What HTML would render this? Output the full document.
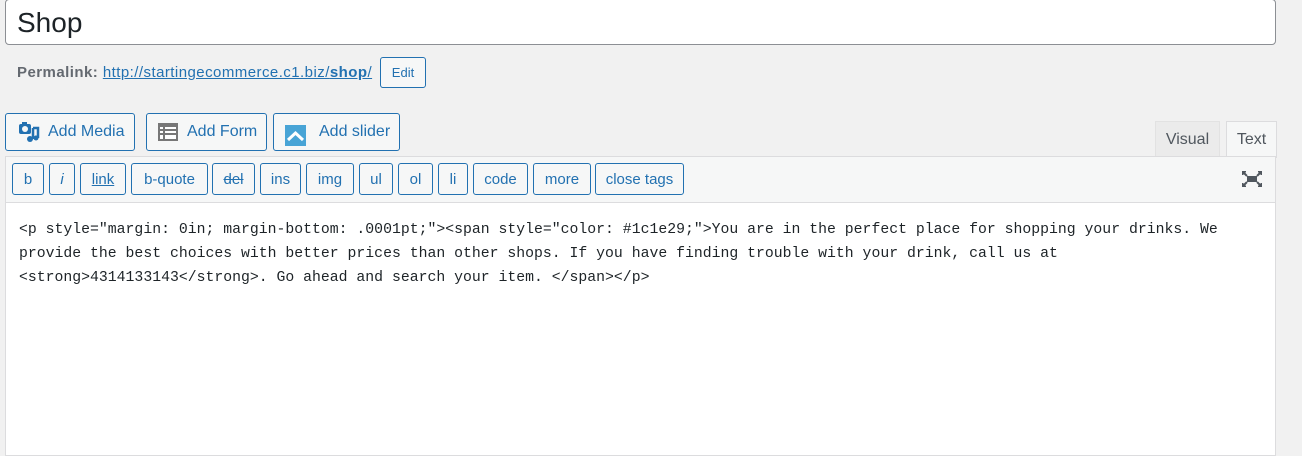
<!DOCTYPE html>
<html><head><style>
body{margin:0;width:1302px;height:455px;background:#f1f1f1;font-family:"Liberation Sans",sans-serif;position:relative;overflow:hidden}
.a{position:absolute;box-sizing:border-box}
.title{left:5px;top:-1px;width:1271px;height:46px;background:#fff;border:1px solid #8c8f94;border-radius:4px;font-size:28px;color:#1d2327;padding:7px 0 0 11px}
.perm{left:17px;top:64px;font-size:15px;color:#646970;letter-spacing:0.45px}
.perm a{color:#2271b1;text-decoration:underline}
.btn{border:1px solid #2271b1;border-radius:3px;background:#f6f7f7;color:#2271b1;font-size:16px;display:flex;align-items:center}
.tb{top:163px;height:32px;border:1px solid #2271b1;border-radius:3px;background:#f6f7f7;color:#2271b1;font-size:15px;display:flex;align-items:center;justify-content:center}
.code{left:19px;top:218px;font-family:"Liberation Mono",monospace;font-size:14.8px;line-height:24px;color:#1d2327;white-space:pre}
</style></head><body>
<div class="a title">Shop</div>
<div class="a perm"><b>Permalink:</b> <a>http://startingecommerce.c1.biz/<b>shop</b>/</a></div>
<div class="a btn" style="left:380px;top:57px;width:46px;height:31px;font-size:13px;justify-content:center">Edit</div>

<div class="a btn" style="left:5px;top:113px;width:130px;height:38px;padding-left:12px">
<svg width="22" height="22" viewBox="0 0 22 22" style="margin-right:8px"><rect x="1" y="3" width="12" height="10" rx="2" fill="#2271b1"/><circle cx="7" cy="8" r="3" fill="#f6f7f7"/><rect x="4" y="1" width="5" height="3" fill="#2271b1"/><path d="M15 7v11M15 7h5v10" stroke="#2271b1" stroke-width="2.5" fill="none"/><circle cx="12" cy="18" r="3" fill="#2271b1"/><circle cx="18" cy="17" r="2.5" fill="#2271b1"/></svg>Add Media</div>
<div class="a btn" style="left:146px;top:113px;width:121px;height:38px;padding-left:11px">
<svg width="20" height="18" viewBox="0 0 20 18" style="margin-right:9px"><rect width="20" height="18" fill="#777"/><rect x="2" y="4" width="16" height="12" fill="#fff"/><rect x="2" y="6" width="16" height="2" fill="#777"/><rect x="2" y="10" width="16" height="2" fill="#777"/><rect x="5" y="4" width="2" height="12" fill="#777"/></svg>Add Form</div>
<div class="a btn" style="left:273px;top:113px;width:127px;height:38px;padding-left:11px">
<svg width="21" height="21" viewBox="0 0 21 21" style="margin-right:13px;margin-top:6px"><rect width="21" height="21" fill="#48a4d6"/><path d="M3 15l7.5-7 7.5 7" stroke="#fff" stroke-width="3" fill="none"/></svg>Add slider</div>

<div class="a" style="left:1155px;top:121px;width:65px;height:36px;background:#ebebeb;border:1px solid #e2e2e2;border-bottom:none;color:#50575e;font-size:16px;text-align:center;line-height:36px">Visual</div>
<div class="a" style="left:1226px;top:121px;width:51px;height:37px;background:#f6f7f7;border:1px solid #dcdcde;border-bottom:none;color:#50575e;font-size:16px;text-align:center;line-height:36px">Text</div>

<div class="a" style="left:5px;top:156px;width:1271px;height:300px;background:#fff;border:1px solid #dcdcde"></div>
<div class="a" style="left:6px;top:157px;width:1269px;height:46px;background:#f6f7f7;border-bottom:1px solid #dcdcde"></div>

<div class="a tb" style="left:12px;width:32px">b</div>
<div class="a tb" style="left:49px;width:26px;font-style:italic">i</div>
<div class="a tb" style="left:80px;width:46px;text-decoration:underline">link</div>
<div class="a tb" style="left:131px;width:77px">b-quote</div>
<div class="a tb" style="left:212px;width:43px;text-decoration:line-through">del</div>
<div class="a tb" style="left:260px;width:41px">ins</div>
<div class="a tb" style="left:306px;width:48px">img</div>
<div class="a tb" style="left:359px;width:34px">ul</div>
<div class="a tb" style="left:398px;width:35px">ol</div>
<div class="a tb" style="left:438px;width:30px">li</div>
<div class="a tb" style="left:473px;width:55px">code</div>
<div class="a tb" style="left:533px;width:58px">more</div>
<div class="a tb" style="left:595px;width:89px">close tags</div>

<svg class="a" style="left:1241px;top:170px" width="22" height="18" viewBox="0 0 22 18"><rect x="6" y="6" width="10" height="6" fill="#50575e"/><path d="M2 2l4 4M20 2l-4 4M2 16l4-4M20 16l-4-4" stroke="#50575e" stroke-width="2"/><path d="M1 1h4v1.5H2.5V5H1zM21 1h-4v1.5h2.5V5H21zM1 17h4v-1.5H2.5V13H1zM21 17h-4v-1.5h2.5V13H21z" fill="#50575e"/></svg>

<div class="a code">&lt;p style="margin: 0in; margin-bottom: .0001pt;"&gt;&lt;span style="color: #1c1e29;"&gt;You are in the perfect place for shopping your drinks. We
provide the best choices with better prices than other shops. If you have finding trouble with your drink, call us at
&lt;strong&gt;4314133143&lt;/strong&gt;. Go ahead and search your item. &lt;/span&gt;&lt;/p&gt;</div>
</body></html>
